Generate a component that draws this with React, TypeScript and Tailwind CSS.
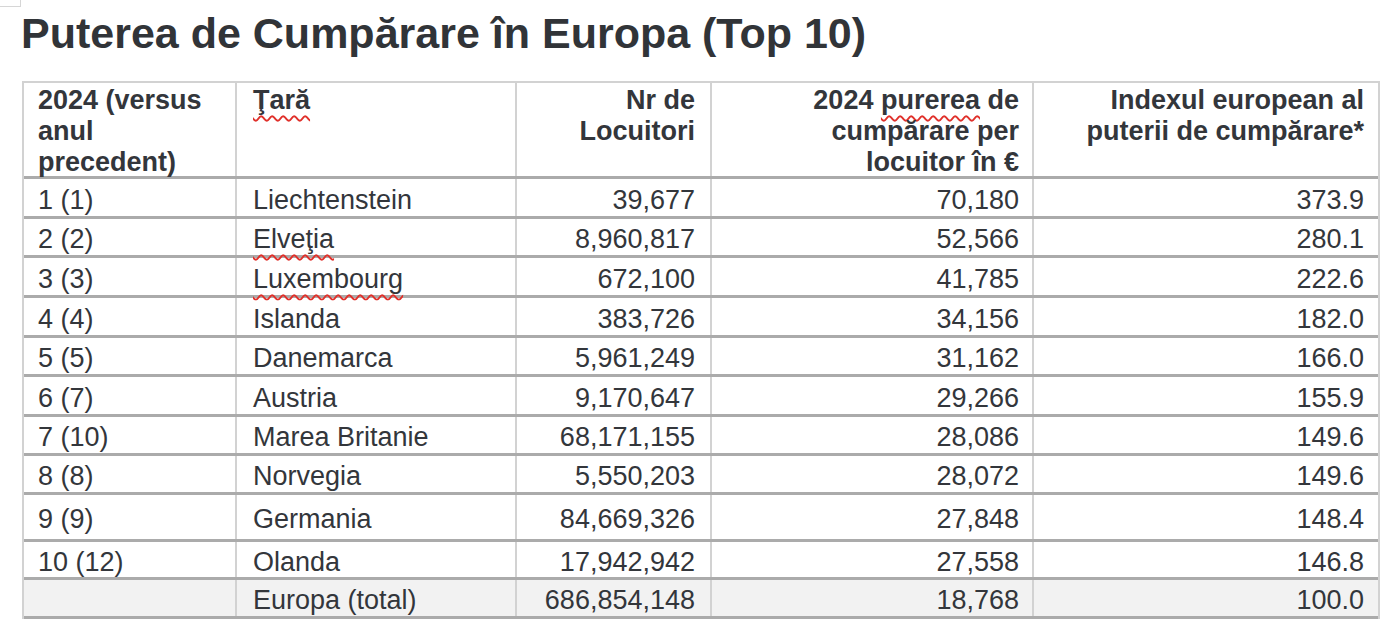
type Row = {
  rank: string;
  country: string;
  people: string;
  power: string;
  index: string;
  h: string;
  squiggle?: boolean;
  total?: boolean;
};

const rows: Row[] = [
  { rank: "1 (1)", country: "Liechtenstein", people: "39,677", power: "70,180", index: "373.9", h: "h-[40px]" },
  { rank: "2 (2)", country: "Elveţia", people: "8,960,817", power: "52,566", index: "280.1", h: "h-[39px]", squiggle: true },
  { rank: "3 (3)", country: "Luxembourg", people: "672,100", power: "41,785", index: "222.6", h: "h-[40px]", squiggle: true },
  { rank: "4 (4)", country: "Islanda", people: "383,726", power: "34,156", index: "182.0", h: "h-[40px]" },
  { rank: "5 (5)", country: "Danemarca", people: "5,961,249", power: "31,162", index: "166.0", h: "h-[39px]" },
  { rank: "6 (7)", country: "Austria", people: "9,170,647", power: "29,266", index: "155.9", h: "h-[40px]" },
  { rank: "7 (10)", country: "Marea Britanie", people: "68,171,155", power: "28,086", index: "149.6", h: "h-[39px]" },
  { rank: "8 (8)", country: "Norvegia", people: "5,550,203", power: "28,072", index: "149.6", h: "h-[39px]" },
  { rank: "9 (9)", country: "Germania", people: "84,669,326", power: "27,848", index: "148.4", h: "h-[47px]" },
  { rank: "10 (12)", country: "Olanda", people: "17,942,942", power: "27,558", index: "146.8", h: "h-[38px]" },
  { rank: "", country: "Europa (total)", people: "686,854,148", power: "18,768", index: "100.0", h: "h-[39px]", total: true },
];

const wavy = "underline decoration-wavy decoration-[#e0302a] decoration-[1.5px] underline-offset-[6px]";

const App = () => {
  return (
    <div className="w-[1400px] h-[628px] bg-white text-[#33363b] font-['Liberation_Sans',Arial,sans-serif] overflow-hidden">
      <div className="w-[21px] h-[7px] border-r border-b border-[#d6d6d6]" />
      <h1 className="mt-[2px] ml-[21px] text-[43px] leading-[48px] font-bold text-[#313438]">
        Puterea de Cumpărare în Europa (Top 10)
      </h1>

      <div className="mt-6 ml-[22px] w-[1358px] border-l-2 border-r-2 border-t-2 border-[#d2d2d2] text-[27px]">
        <div className="flex h-[96px] border-b-[3px] border-[#ababab] font-bold leading-[31px]">
          <div className="w-[213px] border-r-2 border-[#d2d2d2] pl-[14px] pt-[2px]">
            2024 (versus
            <br />
            anul
            <br />
            precedent)
          </div>
          <div className="w-[280px] border-r-2 border-[#d2d2d2] pl-[16px] pt-[2px]">
            <span className={wavy}>Ţară</span>
          </div>
          <div className="w-[195px] border-r-2 border-[#d2d2d2] pr-[15px] pt-[2px] text-right">
            Nr de
            <br />
            Locuitori
          </div>
          <div className="w-[322px] border-r-2 border-[#d2d2d2] pr-[13px] pt-[2px] text-right">
            2024 <span className={wavy}>purerea</span> de
            <br />
            cumpărare per
            <br />
            locuitor în €
          </div>
          <div className="w-[344px] pr-[14px] pt-[2px] text-right">
            Indexul european al
            <br />
            puterii de cumpărare*
          </div>
        </div>

        {rows.map((r) => (
          <div
            key={r.country}
            className={`flex ${r.h} border-b-[3px] border-[#ababab] leading-none ${r.total ? "bg-[#f2f2f2]" : ""}`}
          >
            <div className="w-[213px] flex items-center border-r-2 border-[#d2d2d2] pl-[14px] pt-[5px]">{r.rank}</div>
            <div className="w-[280px] flex items-center border-r-2 border-[#d2d2d2] pl-[16px] pt-[5px]">
              <span className={r.squiggle ? wavy : ""}>{r.country}</span>
            </div>
            <div className="w-[195px] flex items-center justify-end border-r-2 border-[#d2d2d2] pr-[15px] pt-[5px]">{r.people}</div>
            <div className="w-[322px] flex items-center justify-end border-r-2 border-[#d2d2d2] pr-[13px] pt-[5px]">{r.power}</div>
            <div className="w-[344px] flex items-center justify-end pr-[14px] pt-[5px]">{r.index}</div>
          </div>
        ))}
      </div>
    </div>
  );
};

export default App;
